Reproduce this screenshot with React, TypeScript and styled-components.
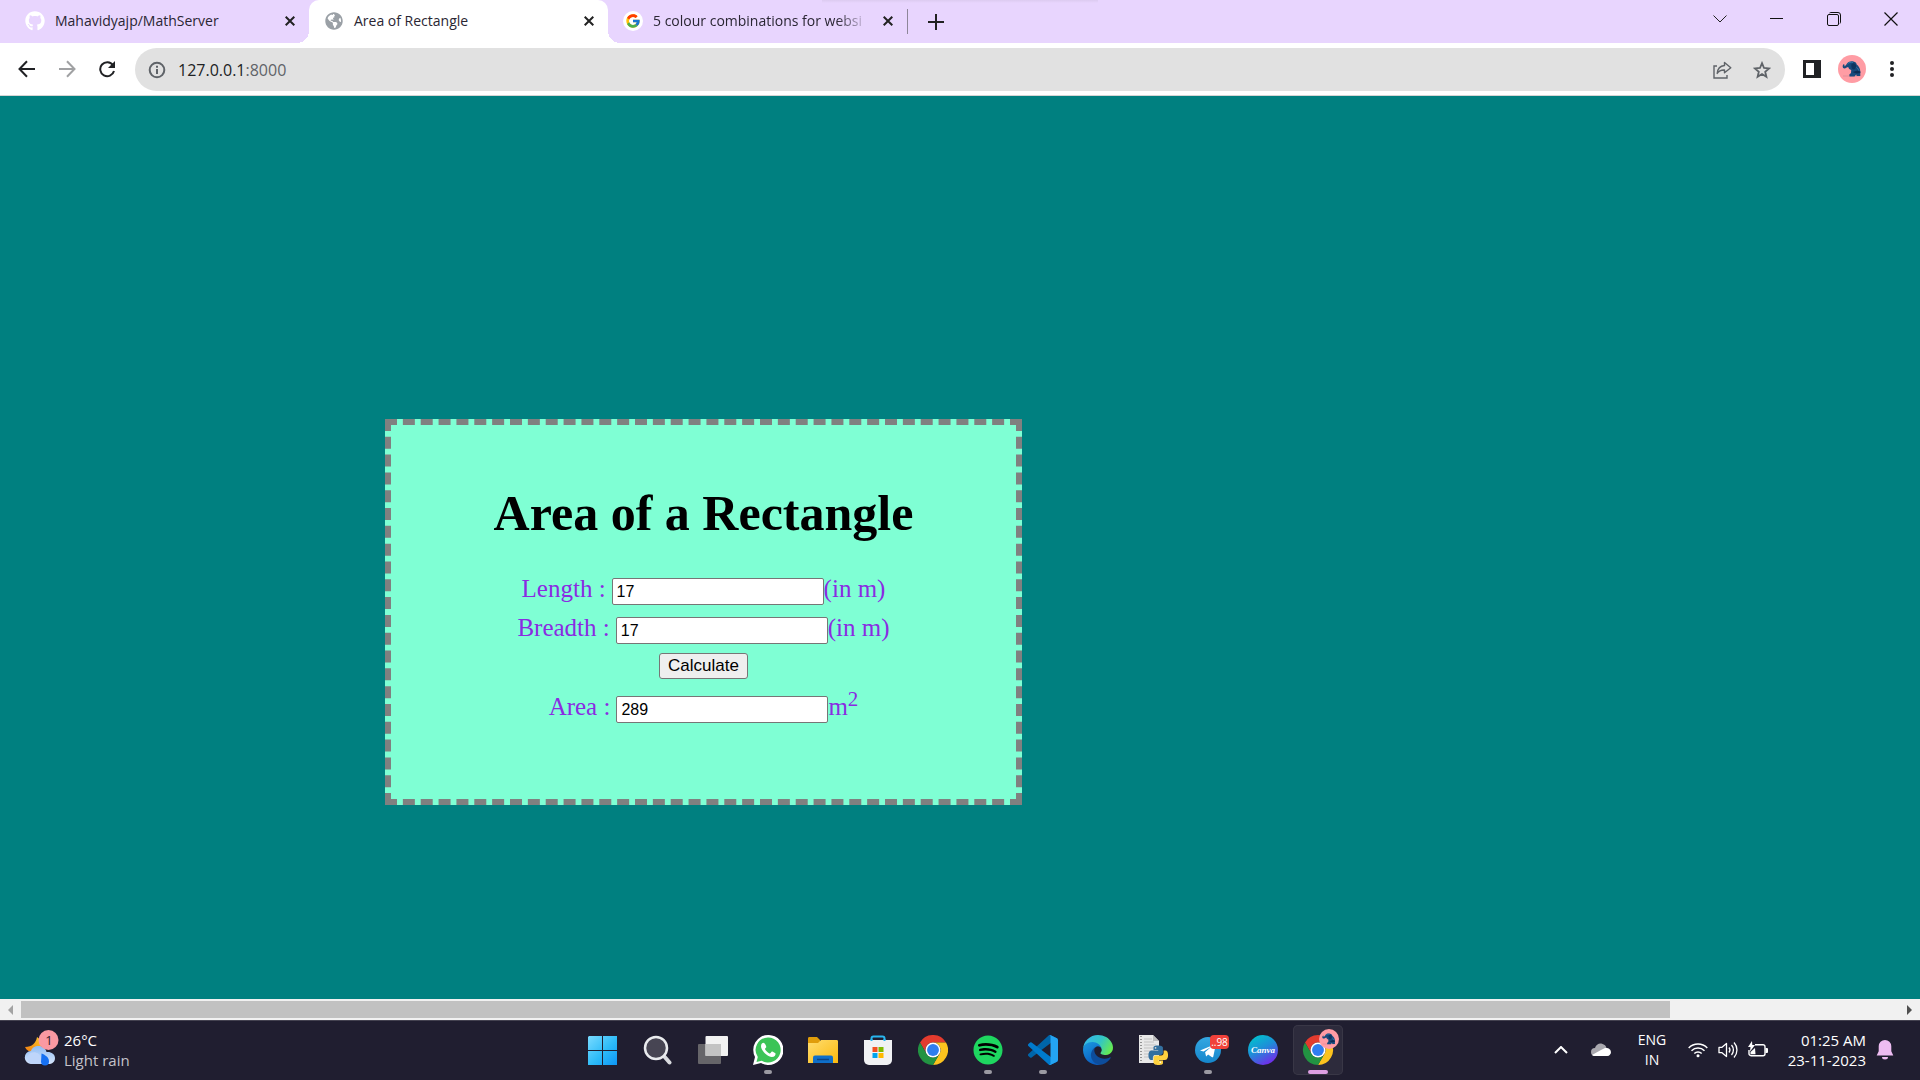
import React, { useState } from 'react';
import styled, { createGlobalStyle, css } from 'styled-components';
import { FaGithub, FaGlobeAmericas, FaSpotify } from 'react-icons/fa';
import { FcGoogle } from 'react-icons/fc';

const ui = `"Open Sans", "Noto Sans", sans-serif`;
const serif = `"Liberation Serif", "Times New Roman", serif`;
const sans = `"Liberation Sans", Arial, sans-serif`;

const GlobalStyle = createGlobalStyle`
  * { box-sizing: border-box; }
  body { margin: 0; overflow: hidden; }
  button { font: inherit; color: inherit; background: none; border: 0; padding: 0; }
  svg { display: block; flex: none; }
`;

const Screen = styled.div`
  display: flex;
  flex-direction: column;
  height: 100vh;
  font-family: ${ui};
`;

/* ---------- Browser chrome ---------- */

const TabStrip = styled.div`
  display: flex;
  justify-content: space-between;
  height: 43px;
  padding-left: 10px;
  background: linear-gradient(#dccbf0, #e8d5fe) no-repeat center top / 276px 3px, #e8d5fe;
`;

const Tabs = styled.div`
  display: flex;
  align-items: stretch;
`;

const flare = css`
  content: '';
  position: absolute;
  bottom: 0;
  width: 12px;
  height: 12px;
`;

const Tab = styled.div<{ $active?: boolean }>`
  position: relative;
  display: flex;
  align-items: center;
  gap: 10px;
  width: 299px;
  padding: 0 10px 2px 15px;
  font-size: 14px;
  color: #2a2633;
  ${(p) =>
    p.$active &&
    css`
      background: #fff;
      border-radius: 10px 10px 0 0;
      &::before {
        ${flare}
        left: -12px;
        background: radial-gradient(circle at 0 0, transparent 12px, #fff 12px);
      }
      &::after {
        ${flare}
        right: -12px;
        background: radial-gradient(circle at 100% 0, transparent 12px, #fff 12px);
      }
    `}
`;

const Favicon = styled.span<{ $color?: string; $disc?: boolean }>`
  display: flex;
  align-items: center;
  justify-content: center;
  width: 20px;
  height: 20px;
  border-radius: 50%;
  font-size: ${(p) => (p.$disc ? 16 : 20)}px;
  color: ${(p) => p.$color};
  background: ${(p) => (p.$disc ? '#fff' : 'none')};
`;

const TabTitle = styled.span<{ $fade?: boolean }>`
  flex: 1;
  min-width: 0;
  white-space: nowrap;
  line-height: 20px;
  ${(p) => p.$fade && 'mask-image: linear-gradient(to right, #000 85%, transparent);'}
`;

const TabClose = styled.button`
  display: flex;
  align-items: center;
  justify-content: center;
  width: 18px;
  height: 20px;
`;

const NewTab = styled.button`
  display: flex;
  align-items: center;
  justify-content: center;
  width: 56px;
`;

const TabDivider = styled.span`
  align-self: center;
  width: 1px;
  height: 25px;
  background: #8e8699;
`;

const WindowControls = styled.div`
  display: flex;
  height: 38px;
  margin-right: 1px;
`;

const WindowButton = styled.button`
  display: flex;
  align-items: center;
  justify-content: center;
  width: 57px;
`;

const Toolbar = styled.div`
  display: flex;
  align-items: center;
  height: 53px;
  padding: 0 8px 0 7px;
  border-bottom: 1px solid #d5d5d5;
  background: #fff;
`;

const ToolButton = styled.button`
  display: flex;
  align-items: center;
  justify-content: center;
  width: 40px;
  height: 40px;
`;

const AddressBar = styled.div`
  display: flex;
  flex: 1;
  align-items: center;
  height: 43px;
  margin: 0 7px 0 8px;
  padding: 1px 3px 0 12px;
  border-radius: 22px;
  background: #e1e1e1;
`;

const Url = styled.a`
  flex: 1;
  margin-left: 11px;
  font-size: 16px;
  line-height: 24px;
  color: #202124;
  text-decoration: none;
`;

const Port = styled.span`
  color: #5f6368;
`;

/* ---------- Page ---------- */

const Page = styled.main`
  flex: 1;
  min-height: 0;
  overflow: hidden;
  padding: 323px 0 0 385px;
  background: #008080;
`;

const Box = styled.form`
  display: flex;
  flex-direction: column;
  align-items: center;
  width: 637px;
  padding: 60px 25px 67px;
  border: 6px dashed #808080;
  background: #7fffd4;
  font-family: ${serif};
`;

const Heading = styled.h1`
  margin: 0 0 34px;
  font-size: 50px;
  line-height: 56px;
  font-weight: bold;
  color: #000;
`;

const Field = styled.div`
  display: flex;
  align-items: baseline;
  height: 31px;
  margin-bottom: 8px;
  font-size: 25px;
  line-height: 28px;
  color: #8a2be2;
`;

const FieldLabel = styled.label`
  margin-right: 6px;
`;

const Super = styled.sup`
  font-size: 21px;
  line-height: 0;
`;

const TextBox = styled.input`
  width: 212px;
  height: 27px;
  padding: 3px 4px 1px;
  border: 1px solid #767676;
  border-radius: 2px;
  background: #fff;
  font-family: ${sans};
  font-size: 16px;
  color: #000;
`;

const Calculate = styled.button`
  height: 26px;
  margin-bottom: 14px;
  padding: 0 8px;
  border: 1px solid #767676;
  border-radius: 3px;
  background: #efefef;
  font-family: ${sans};
  font-size: 17px;
  line-height: 24px;
  color: #000;
`;

const ScrollTrack = styled.div`
  display: flex;
  align-items: center;
  height: 21px;
  background: #f1f1f1;
`;

const ScrollArrow = styled.button`
  display: flex;
  align-items: center;
  justify-content: center;
  width: 21px;
  height: 21px;
`;

const ScrollLane = styled.div`
  flex: 1;
`;

const ScrollThumb = styled.div`
  width: 87.8%;
  height: 17px;
  background: #c1c1c1;
`;

/* ---------- Taskbar ---------- */

const Taskbar = styled.footer`
  display: grid;
  grid-template-columns: 1fr auto 1fr;
  height: 60px;
  padding-bottom: 2px;
  border-top: 1px solid #444250;
  background: #201e30;
  color: #fff;
  font-size: 15px;
  line-height: 20px;
`;

const Weather = styled.button`
  display: flex;
  align-items: center;
  gap: 4px;
  padding-left: 24px;
  text-align: left;
`;

const Muted = styled.div`
  color: #c4c3ca;
`;

const Apps = styled.nav`
  display: flex;
  align-items: center;
  gap: 5px;
`;

const AppButton = styled.button<{ $active?: boolean }>`
  position: relative;
  display: flex;
  align-items: center;
  justify-content: center;
  width: 50px;
  height: 50px;
  border-radius: 5px;
  ${(p) => p.$active && 'background: #2d2b3c; box-shadow: inset 0 0 0 1px #393746;'}
`;

const Indicator = styled.span<{ $active?: boolean }>`
  position: absolute;
  bottom: 1px;
  width: ${(p) => (p.$active ? 20 : 8)}px;
  height: 4px;
  border-radius: 2px;
  background: ${(p) => (p.$active ? '#dd9fe3' : '#9b9aa2')};
`;

const Tray = styled.div`
  display: flex;
  align-items: center;
  justify-content: flex-end;
  padding-right: 23px;
`;

const TrayButton = styled.button<{ $w: number }>`
  display: flex;
  align-items: center;
  justify-content: center;
  width: ${(p) => p.$w}px;
  height: 50px;
`;

const Language = styled.button`
  width: 62px;
  font-size: 14px;
  text-align: center;
`;

const Clock = styled.button`
  width: 93px;
  margin-right: 7px;
  text-align: right;
`;

/* ---------- Drawings ---------- */

const CloseGlyph = () => (
  <svg width="10" height="10" viewBox="0 0 10 10" stroke="#222" strokeWidth="2" aria-hidden>
    <path d="M.7.7l8.6 8.6M9.3.7L.7 9.3" />
  </svg>
);

const Elephant = () => (
  <>
    <circle cx="14" cy="14" r="14" fill="#ff9ca4" />
    <path d="M5 20.500h17v1H5z" fill="#e28e98" />
    <path
      d="M9 8.500C10.500 6.500 13 6 15.500 6.500c2 .4 3 1.500 3.200 3 2 1.500 3.600 4 3.600 7V21h-3.600l-.5-1.500-1.700 2h-5l-.2-2 1.700-1.500.2-3c-1.500-.5-2.700-1.500-3-3l-1.500.5c-1.200 1-2.700 1.300-3.500.5C4.300 12 4.500 9.500 6 9l.6 1.300-.4 1c1.200-.2 2-1.500 2.800-2.800z"
      fill="#174a7c"
    />
    <path d="M13.500 9c1.500-1.500 4-1 4.500 1.500.3 2-1 4-2.500 4-2-.5-2.500-3.500-2-5.500z" fill="#0d3560" />
    <path d="M14.500 17l5-1.500 2.800 1V18l-4 .5z" fill="#0d2c54" />
    <path d="M9.500 9c1.500-1.700 3.500-2 5.500-1.700M18.500 12.500c1.300.8 2 2 2.300 3" stroke="#367cae" fill="none" />
  </>
);

const ChromeLogo = () => (
  <>
    <path d="M3.200 12A24 24 0 0 1 44.800 12H24A12 12 0 0 0 13.600 30Z" fill="#e33b2e" />
    <path d="M44.800 12A24 24 0 0 1 24 48L34.400 30A12 12 0 0 0 24 12Z" fill="#fcc31e" />
    <path d="M24 48A24 24 0 0 1 3.200 12L13.600 30A12 12 0 0 0 34.400 30Z" fill="#229342" />
    <circle cx="24" cy="24" r="12" fill="#fff" />
    <circle cx="24" cy="24" r="9.500" fill="#2f7df0" />
  </>
);

const WeatherIcon = () => (
  <svg width="36" height="40" viewBox="0 2 36 40" aria-hidden>
    <defs>
      <linearGradient id="cloud" x1="0" y1="0" x2="0" y2="1">
        <stop offset="0" stopColor="#8fbcf5" />
        <stop offset="1" stopColor="#d5e5fb" />
      </linearGradient>
      <linearGradient id="moon" x1="0" y1="1" x2="1" y2="0">
        <stop offset="0" stopColor="#f07c10" />
        <stop offset="1" stopColor="#fbc62c" />
      </linearGradient>
    </defs>
    <path d="M13 9c-1 6-5 10-12 10 2 5 9 7 14 3 4-4 3-10-2-13z" fill="url(#moon)" />
    <path d="M7.500 36a6.500 6.500 0 0 1-.5-13c1-4 6-6 10.500-4.500 3 1 4.500 3 5 5.500 4.500-.5 8.500 2 8.500 6s-3 6-6.500 6z" fill="url(#cloud)" />
    <path d="M7.500 36a6 6 0 0 1-1-11c4-2 9.500 0 10.500 5v6z" fill="#bed5fa" />
    <path d="M17.500 25.500c4 1.500 7.500 4 7.500 8a4 4 0 0 1-8 0z" fill="#1670f2" />
    <circle cx="24.500" cy="12" r="10" fill="#fb99a2" />
    <text x="25" y="17" textAnchor="middle" fontSize="13" fontFamily={ui} fill="#33202c">1</text>
  </svg>
);

const StartIcon = () => (
  <svg width="30" height="30" viewBox="0 0 30 30" aria-hidden>
    <defs>
      <linearGradient id="start" gradientUnits="userSpaceOnUse" x1="0" y1="0" x2="30" y2="30">
        <stop offset="0" stopColor="#7cdcff" />
        <stop offset=".55" stopColor="#2dbbf8" />
        <stop offset="1" stopColor="#0c94f4" />
      </linearGradient>
    </defs>
    <path d="M1 1h13v14H0V2zM15 1h14v14H15zM0 16h14v14H0zM15 16h14v14H15z" fill="url(#start)" />
  </svg>
);

const SearchIcon = () => (
  <svg width="30" height="30" viewBox="0 0 30 30" aria-hidden>
    <path d="M20 20l6.500 7.500" stroke="#d8dade" strokeWidth="4" strokeLinecap="round" />
    <circle cx="13" cy="13" r="11" fill="#474553" stroke="#e9ebee" strokeWidth="2.500" />
  </svg>
);

const TaskViewIcon = () => (
  <svg width="30" height="30" viewBox="0 0 30 30" aria-hidden>
    <rect x="0" y="9" width="23" height="20" rx="1" fill="#666569" />
    <rect x="7.500" y="1" width="22.500" height="20" rx="1" fill="#f2f2f2" />
    <path d="M7.500 9H23v12H7.500z" fill="#c3c3c3" />
  </svg>
);

const WhatsAppIcon = () => (
  <svg width="30" height="30" viewBox="0 0 30 30" aria-hidden>
    <path d="M15 0a15 15 0 1 1-7 28L0 30l2-8A15 15 0 0 1 15 0z" fill="#fff" />
    <path d="M15 2.500a12.500 12.500 0 1 1-6.300 23.200L3.500 27l1.300-5A12.500 12.500 0 0 1 15 2.500z" fill="#3cc457" />
    <path
      d="M10.300 7.700c-.6 0-2.300.8-2.300 3.600 0 4 6.300 10.700 10.800 10.700 2.800 0 3.800-1.800 3.800-3.200 0-.6-3-2.200-3.600-2.200-.7 0-1.300 1.900-2 1.900-1.200 0-4.800-3.200-5-4.600 0-.5 1.300-1.300 1.300-2 0-.6-1.300-4.200-3-4.200z"
      fill="#fff"
    />
  </svg>
);

const ExplorerIcon = () => (
  <svg width="30" height="30" viewBox="0 0 30 30" aria-hidden>
    <defs>
      <linearGradient id="folder" x1="0" y1="0" x2="1" y2="1">
        <stop offset="0" stopColor="#ffdd70" />
        <stop offset="1" stopColor="#fbb90d" />
      </linearGradient>
    </defs>
    <path d="M0 3.500C0 2.500.5 2 1.500 2H9l3 3v5H0z" fill="#e09d0b" />
    <path d="M0 8h10l3-3h15.500c1 0 1.500.5 1.500 1.500V28H0z" fill="url(#folder)" />
    <path d="M5 28v-5.500a2 2 0 0 1 2-2h16a2 2 0 0 1 2 2V28z" fill="#0f6fc9" />
    <path d="M9 24.500h12" stroke="#0c4485" strokeWidth="1.500" />
  </svg>
);

const StoreIcon = () => (
  <svg width="30" height="30" viewBox="0 0 30 30" aria-hidden>
    <path d="M8.500 7V3.500c0-1.300.5-2 2-2h9c1.500 0 2 .7 2 2V7" fill="none" stroke="#28b6ef" strokeWidth="2" />
    <path d="M1 5h28v20a5 5 0 0 1-5 5H6a5 5 0 0 1-5-5z" fill="#f1f2f4" />
    <path d="M8.500 6V4M21.500 6V4" stroke="#28b6ef" strokeWidth="2" />
    <path d="M9.500 12h5v5h-5z" fill="#f25022" />
    <path d="M15.500 12h5v5h-5z" fill="#7fba00" />
    <path d="M9.500 18h5v5h-5z" fill="#00a4ef" />
    <path d="M15.500 18h5v5h-5z" fill="#ffb900" />
  </svg>
);

const ChromeIcon = () => (
  <svg width="30" height="30" viewBox="0 0 48 48" aria-hidden>
    <ChromeLogo />
  </svg>
);

const ChromeProfileIcon = () => (
  <svg width="42" height="42" viewBox="0 0 42 42" aria-hidden>
    <g transform="translate(6 6) scale(.625)">
      <ChromeLogo />
    </g>
    <g transform="translate(22 0) scale(.714)">
      <Elephant />
    </g>
  </svg>
);

const SpotifyIcon = () => (
  <svg width="30" height="30" viewBox="0 0 30 30" aria-hidden>
    <circle cx="15" cy="15" r="13" fill="#000" />
    <FaSpotify size={30} color="#1ed760" />
  </svg>
);

const VsCodeIcon = () => (
  <svg width="30" height="30" viewBox="0 0 100 100" aria-hidden>
    <path d="M96.460 10.800L75.860.88a6.230 6.230 0 0 0-7.110 1.200L1.300 63.600a4.170 4.170 0 0 0 0 6.160l5.500 5a4.160 4.160 0 0 0 5.320.24L93.350 13.400A4.140 4.140 0 0 1 100 16.700v-.25a6.250 6.250 0 0 0-3.540-5.650z" fill="#0065a9" />
    <path d="M96.460 89.200l-20.600 9.920a6.230 6.230 0 0 1-7.110-1.200L1.300 36.400a4.170 4.170 0 0 1 0-6.160l5.500-5a4.160 4.160 0 0 1 5.320-.24l81.230 61.600A4.140 4.140 0 0 0 100 83.300v.25a6.250 6.250 0 0 1-3.540 5.650z" fill="#007acc" />
    <path d="M75.860 99.130a6.230 6.230 0 0 1-7.110-1.210c2.300 2.300 6.250.67 6.250-2.590V4.670c0-3.260-3.950-4.890-6.250-2.590a6.230 6.230 0 0 1 7.110-1.210l20.600 9.900A6.250 6.250 0 0 1 100 16.400v67.200a6.250 6.250 0 0 1-3.540 5.640z" fill="#24a4f2" />
  </svg>
);

const EdgeIcon = () => (
  <svg width="30" height="30" viewBox="0 0 256 256" aria-hidden>
    <defs>
      <linearGradient id="edgeTop" x1="0" y1=".2" x2="1" y2=".6">
        <stop offset="0" stopColor="#35b8ee" />
        <stop offset=".55" stopColor="#33c6c4" />
        <stop offset="1" stopColor="#66eb50" />
      </linearGradient>
      <linearGradient id="edgeMid" x1="0" y1="0" x2=".5" y2="1">
        <stop offset="0" stopColor="#1b9de2" />
        <stop offset="1" stopColor="#0a5cc0" />
      </linearGradient>
    </defs>
    <path d="M231 190.500c-3.400 1.800-6.900 3.400-10.500 4.700a101.900 101.900 0 0 1-35.900 6.500c-47.300 0-88.500-32.500-88.500-74.300a31.500 31.500 0 0 1 16.400-27.300c-42.800 1.800-53.800 46.400-53.800 72.500 0 74 68.100 81.400 82.800 81.400 7.900 0 19.800-2.300 27-4.600l1.300-.4a128.300 128.300 0 0 0 66.600-52.800 4 4 0 0 0-5.400-5.700z" fill="#0d4d9c" />
    <path d="M105.700 241.400a79.200 79.200 0 0 1-22.700-21.300 80.700 80.700 0 0 1 29.500-120c3.200-1.500 8.500-4.100 15.600-4a32.400 32.400 0 0 1 25.700 13 31.900 31.900 0 0 1 6.300 18.700c0-.2 24.500-79.600-80-79.600-43.900 0-80 41.600-80 78.200a130.200 130.200 0 0 0 12.100 56 128 128 0 0 0 156.400 67 75.500 75.500 0 0 1-62.800-8z" fill="url(#edgeMid)" />
    <path d="M152.300 148.900c-.9 1-3.400 2.500-3.400 5.600 0 2.600 1.700 5.200 4.800 7.300 14.300 10 41.400 8.600 41.500 8.600a59.600 59.600 0 0 0 30.300-8.300 61.400 61.400 0 0 0 30.400-52.900c.3-22.400-8-37.300-11.300-43.900C223.500 23.900 177.700 0 128 0A128 128 0 0 0 0 126.200c.5-36.500 36.800-66 80-66 3.500 0 23.500.3 42 10a72.600 72.600 0 0 1 30.900 29.300c6.100 10.600 7.200 24.100 7.200 29.500s-2.700 13.300-7.800 19.900z" fill="url(#edgeTop)" />
  </svg>
);

const PythonFileIcon = () => (
  <svg width="30" height="30" viewBox="0 0 30 30" aria-hidden>
    <path d="M1 0h14l6 6v22H1z" fill="#e8e8e8" />
    <path d="M15 0v6h6z" fill="#bcbcbc" />
    <path d="M3 1v26" stroke="#777" strokeWidth="1.500" strokeDasharray="1 2" />
    <path d="M6 4h8M6 7h10M6 10h12M6 13h12M6 16h11M6 19h11M6 22h11" stroke="#c2c2c2" />
    <g transform="translate(10.500 10.500) scale(.81)">
      <path
        d="M14.250.18l.9.2.73.26.59.3.45.32.34.34.25.34.16.33.1.3.04.26.02.2-.01.13V8.500l-.05.63-.13.55-.21.46-.26.38-.3.31-.33.25-.35.19-.35.14-.33.1-.3.07-.26.04-.21.02H8.770l-.69.05-.59.14-.5.22-.41.27-.33.32-.27.35-.2.36-.15.37-.1.35-.07.32-.04.27-.02.21v3.060H3.170l-.21-.03-.28-.07-.32-.12-.35-.18-.36-.26-.36-.36-.35-.46-.32-.59-.28-.73-.21-.88-.14-1.050-.05-1.230.06-1.220.16-1.040.24-.87.32-.71.36-.57.4-.44.42-.33.42-.24.4-.16.36-.1.32-.05.24-.01h.16l.06.01h8.160v-.83H6.180l-.01-2.750-.02-.37.05-.34.11-.31.17-.28.25-.26.31-.23.38-.2.44-.18.51-.15.58-.12.64-.1.71-.06.77-.04.84-.02 1.270.05zm-6.300 1.980l-.23.33-.08.41.08.41.23.34.33.22.41.09.41-.09.33-.22.23-.34.08-.41-.08-.41-.23-.33-.33-.22-.41-.09-.41.09z"
        fill="#33709f"
      />
      <path
        d="M21.100 6.110l.28.06.32.12.35.18.36.27.36.35.35.47.32.59.28.73.21.88.14 1.040.05 1.230-.06 1.230-.16 1.040-.24.86-.32.71-.36.57-.4.45-.42.33-.42.24-.4.16-.36.09-.32.05-.24.02-.16-.01h-8.220v.82h5.840l.01 2.760.02.36-.05.34-.11.31-.17.29-.25.25-.31.24-.38.2-.44.17-.51.15-.58.13-.64.09-.71.07-.77.04-.84.01-1.270-.04-1.070-.14-.9-.2-.73-.25-.59-.3-.45-.33-.34-.34-.25-.34-.16-.33-.1-.3-.04-.25-.02-.2.01-.13v-5.340l.05-.64.13-.54.21-.46.26-.38.3-.32.33-.24.35-.2.35-.14.33-.1.3-.06.26-.04.21-.02.13-.01h5.840l.69-.05.59-.14.5-.21.41-.28.33-.32.27-.35.2-.36.15-.36.1-.35.07-.32.04-.28.02-.21V6.070h2.090z"
        fill="#ffd23f"
      />
      <circle cx="14.600" cy="20.700" r="1" fill="#fff" />
    </g>
  </svg>
);

const TelegramIcon = () => (
  <svg width="42" height="34" viewBox="0 0 42 34" aria-hidden>
    <defs>
      <linearGradient id="telegram" x1="0" y1="0" x2="0" y2="1">
        <stop offset="0" stopColor="#34a8e2" />
        <stop offset="1" stopColor="#1586cc" />
      </linearGradient>
    </defs>
    <circle cx="21" cy="17" r="13" fill="url(#telegram)" />
    <path d="M13 17.500l14.500-6c.8-.3 1.300.2 1.100 1.100l-2.300 10.800c-.2 1-.8 1.200-1.600.7l-3.600-2.700-2 2-1-4.100 6.200-5.600-7.800 4.900z" fill="#fff" />
    <rect x="23" y="2" width="19" height="14" rx="4" fill="#f0413a" />
    <text x="32.500" y="13" textAnchor="middle" fontSize="10" fontFamily={ui} fill="#fff">..98</text>
  </svg>
);

const CanvaIcon = () => (
  <svg width="30" height="30" viewBox="0 0 30 30" aria-hidden>
    <defs>
      <linearGradient id="canva" x1=".2" y1="0" x2=".75" y2="1">
        <stop offset="0" stopColor="#00c4cc" />
        <stop offset=".45" stopColor="#1d8fd8" />
        <stop offset="1" stopColor="#7a22ec" />
      </linearGradient>
    </defs>
    <circle cx="15" cy="15" r="15" fill="url(#canva)" />
    <text x="15" y="18" textAnchor="middle" fontSize="9" fontStyle="italic" fontWeight="bold" fontFamily={serif} fill="#fff">Canva</text>
  </svg>
);

const apps = [
  { name: 'Start', Icon: StartIcon },
  { name: 'Search', Icon: SearchIcon },
  { name: 'Task View', Icon: TaskViewIcon },
  { name: 'WhatsApp', Icon: WhatsAppIcon, running: true },
  { name: 'File Explorer', Icon: ExplorerIcon },
  { name: 'Microsoft Store', Icon: StoreIcon },
  { name: 'Google Chrome', Icon: ChromeIcon },
  { name: 'Spotify', Icon: SpotifyIcon, running: true },
  { name: 'Visual Studio Code', Icon: VsCodeIcon, running: true },
  { name: 'Microsoft Edge', Icon: EdgeIcon },
  { name: 'Python', Icon: PythonFileIcon },
  { name: 'Telegram', Icon: TelegramIcon, running: true },
  { name: 'Canva', Icon: CanvaIcon },
  { name: 'Chrome profile', Icon: ChromeProfileIcon, running: true, active: true },
];

function BrowserTabs() {
  return (
    <TabStrip>
      <Tabs>
        <Tab>
          <Favicon $color="#fff"><FaGithub /></Favicon>
          <TabTitle>Mahavidyajp/MathServer</TabTitle>
          <TabClose aria-label="Close tab"><CloseGlyph /></TabClose>
        </Tab>
        <Tab $active>
          <Favicon $color="#9aa0a6"><FaGlobeAmericas size={18} /></Favicon>
          <TabTitle>Area of Rectangle</TabTitle>
          <TabClose aria-label="Close tab"><CloseGlyph /></TabClose>
        </Tab>
        <Tab>
          <Favicon $disc><FcGoogle /></Favicon>
          <TabTitle $fade>5 colour combinations for websi</TabTitle>
          <TabClose aria-label="Close tab"><CloseGlyph /></TabClose>
        </Tab>
        <TabDivider />
        <NewTab aria-label="New tab">
          <svg width="16" height="16" viewBox="0 0 16 16" stroke="#222" strokeWidth="2" aria-hidden>
            <path d="M8 0v16M0 8h16" />
          </svg>
        </NewTab>
      </Tabs>
      <WindowControls>
        <WindowButton aria-label="Search tabs">
          <svg width="14" height="8" viewBox="0 0 14 8" fill="none" stroke="#222" aria-hidden><path d="M.5.5L7 7 13.500.5" /></svg>
        </WindowButton>
        <WindowButton aria-label="Minimize">
          <svg width="13" height="2" viewBox="0 0 13 2" aria-hidden><path d="M0 0h13v1H0z" fill="#111" /></svg>
        </WindowButton>
        <WindowButton aria-label="Restore">
          <svg width="14" height="14" viewBox="0 0 14 14" fill="none" stroke="#111" aria-hidden>
            <rect x=".5" y="2.500" width="11" height="11" rx="1.500" />
            <path d="M2.500 1C3 .6 3.500.5 4 .5h7a2.500 2.500 0 0 1 2.500 2.500v7c0 .5-.1 1-.5 1.500" />
          </svg>
        </WindowButton>
        <WindowButton aria-label="Close">
          <svg width="14" height="14" viewBox="0 0 14 14" stroke="#111" strokeWidth="1.200" aria-hidden><path d="M.5.5l13 13M13.500.5l-13 13" /></svg>
        </WindowButton>
      </WindowControls>
    </TabStrip>
  );
}

function BrowserToolbar() {
  return (
    <Toolbar>
      <ToolButton aria-label="Back">
        <svg width="18" height="18" viewBox="0 0 18 18" fill="none" stroke="#202124" strokeWidth="2" aria-hidden>
          <path d="M17 9H2M9 1.300L1.500 9 9 16.700" />
        </svg>
      </ToolButton>
      <ToolButton aria-label="Forward">
        <svg width="18" height="18" viewBox="0 0 18 18" fill="none" stroke="#a0a1a3" strokeWidth="2" aria-hidden>
          <path d="M1 9H16M9 1.300L16.500 9 9 16.700" />
        </svg>
      </ToolButton>
      <ToolButton aria-label="Reload">
        <svg width="18" height="18" viewBox="0 0 18 18" fill="none" aria-hidden>
          <path d="M15 5.200a7 7 0 1 0 1 5.800" stroke="#202124" strokeWidth="2" />
          <path d="M17 1v7h-7z" fill="#202124" />
        </svg>
      </ToolButton>
      <AddressBar>
        <svg width="20" height="20" viewBox="0 0 20 20" fill="none" stroke="#5f6368" strokeWidth="2" aria-hidden>
          <circle cx="10" cy="10" r="7.300" />
          <path d="M10 9v5M10 5.800v2" />
        </svg>
        <Url href="#">127.0.0.1<Port>:8000</Port></Url>
        <ToolButton aria-label="Share">
          <svg width="19" height="18" viewBox="0 0 19 18" fill="none" stroke="#5f6368" strokeWidth="1.400" aria-hidden>
            <path d="M4 5H1v12h13v-3" />
            <path d="M11.500 1.500l6.300 5.200-6.300 5V9c-3.500-.2-5.700.9-7.300 3.500C4.500 8 7 5 11.500 4.500z" strokeLinejoin="round" />
          </svg>
        </ToolButton>
        <ToolButton aria-label="Bookmark">
          <svg width="18" height="18" viewBox="0 0 18 18" fill="none" stroke="#5f6368" strokeWidth="1.800" aria-hidden>
            <path d="M9 2.200l2 4.800 5.100.4-3.900 3.400 1.200 5L9 13.100l-4.400 2.700 1.200-5L1.900 7.400 7 7z" />
          </svg>
        </ToolButton>
      </AddressBar>
      <ToolButton aria-label="Side panel">
        <svg width="18" height="18" viewBox="0 0 18 18" aria-hidden>
          <path d="M0 0h18v18H0zM3 3v12h8V3z" fillRule="evenodd" fill="#202124" />
        </svg>
      </ToolButton>
      <ToolButton aria-label="Profile">
        <svg width="28" height="28" viewBox="0 0 28 28" aria-hidden><Elephant /></svg>
      </ToolButton>
      <ToolButton aria-label="Menu">
        <svg width="4" height="16" viewBox="0 0 4 16" fill="#202124" aria-hidden>
          <circle cx="2" cy="2" r="2" /><circle cx="2" cy="8" r="2" /><circle cx="2" cy="14" r="2" />
        </svg>
      </ToolButton>
    </Toolbar>
  );
}

function AreaForm() {
  const [length, setLength] = useState('17');
  const [breadth, setBreadth] = useState('17');
  const [area, setArea] = useState('289');
  const submit = (e: React.FormEvent) => {
    e.preventDefault();
    setArea(String(Number(length) * Number(breadth)));
  };
  return (
    <Box onSubmit={submit}>
      <Heading>Area of a Rectangle</Heading>
      <Field>
        <FieldLabel htmlFor="length">Length :</FieldLabel>
        <TextBox id="length" value={length} onChange={(e) => setLength(e.target.value)} />
        <span>(in m)</span>
      </Field>
      <Field>
        <FieldLabel htmlFor="breadth">Breadth :</FieldLabel>
        <TextBox id="breadth" value={breadth} onChange={(e) => setBreadth(e.target.value)} />
        <span>(in m)</span>
      </Field>
      <Calculate type="submit">Calculate</Calculate>
      <Field>
        <FieldLabel htmlFor="area">Area :</FieldLabel>
        <TextBox id="area" value={area} readOnly />
        <span>m<Super>2</Super></span>
      </Field>
    </Box>
  );
}

function WindowsTaskbar() {
  return (
    <Taskbar>
      <Weather>
        <WeatherIcon />
        <div>
          <div>26°C</div>
          <Muted>Light rain</Muted>
        </div>
      </Weather>
      <Apps>
        {apps.map(({ name, Icon, running, active }) => (
          <AppButton key={name} aria-label={name} $active={active}>
            <Icon />
            {running && <Indicator $active={active} />}
          </AppButton>
        ))}
      </Apps>
      <Tray>
        <TrayButton $w={40} aria-label="Show hidden icons">
          <svg width="14" height="8" viewBox="0 0 14 8" fill="none" stroke="#fff" strokeWidth="2" aria-hidden><path d="M1 7l6-6 6 6" /></svg>
        </TrayButton>
        <TrayButton $w={40} aria-label="OneDrive">
          <svg width="20" height="14" viewBox="0 0 20 14" aria-hidden>
            <path d="M4 13a4 4 0 0 1 0-8c1-3.500 4-5 7-4.300 2.500.6 4 2.300 4.500 4.300 3 0 4.500 2 4.500 4s-1.500 4-4 4z" fill="#a9a8ae" />
            <path d="M1 12l9-5 3-1.500c2-1 4-.5 6 1.500 2 3-.5 6-3 6H4c-1.500 0-2.500-.5-3-1z" fill="#fff" />
          </svg>
        </TrayButton>
        <Language>
          <div>ENG</div>
          <div>IN</div>
        </Language>
        <TrayButton $w={30} aria-label="Wi-Fi">
          <svg width="20" height="16" viewBox="0 0 20 16" fill="none" stroke="#fff" strokeWidth="1.500" aria-hidden>
            <path d="M.7 6a13 13 0 0 1 18.600 0M3.500 8.800a9.200 9.200 0 0 1 13 0M6.300 11.500a5.200 5.200 0 0 1 7.400 0" />
            <circle cx="10" cy="13.800" r="1.500" fill="#fff" stroke="none" />
          </svg>
        </TrayButton>
        <TrayButton $w={30} aria-label="Volume">
          <svg width="20" height="18" viewBox="0 0 20 18" fill="none" stroke="#fff" strokeWidth="1.300" aria-hidden>
            <path d="M1 6.300h3L8.500 2.500v13L4 11.700H1z" strokeLinejoin="round" />
            <path d="M11 6.500a4 4 0 0 1 0 5M13.500 4a7.500 7.500 0 0 1 0 10M16 1.500a11 11 0 0 1 0 15" />
          </svg>
        </TrayButton>
        <TrayButton $w={30} aria-label="Battery">
          <svg width="20" height="18" viewBox="0 0 20 18" fill="none" aria-hidden>
            <path d="M7 3.700h8a2 2 0 0 1 2 2v7a2 2 0 0 1-2 2H3a2 2 0 0 1-2-2V9" stroke="#fff" strokeWidth="1.400" />
            <path d="M17.500 7h1.500a1 1 0 0 1 1 1v3a1 1 0 0 1-1 1h-1.500z" fill="#fff" />
            <path d="M2.500 13.200V11L7 7l.5 6.200zM4 0L0 6h2.500L2 10.500 7 4H4.300z" fill="#fff" />
          </svg>
        </TrayButton>
        <Clock>
          <div>01:25 AM</div>
          <div>23-11-2023</div>
        </Clock>
        <TrayButton $w={24} aria-label="Notifications">
          <svg width="18" height="20" viewBox="0 0 18 20" aria-hidden>
            <path d="M9 0a6.300 6.300 0 0 1 6.300 6.300v5l2 4.200H.7l2-4.200v-5A6.300 6.300 0 0 1 9 0zM6 17h6a3 2.500 0 0 1-6 0z" fill="#eebcf2" />
          </svg>
        </TrayButton>
      </Tray>
    </Taskbar>
  );
}

export default function App() {
  return (
    <Screen>
      <GlobalStyle />
      <BrowserTabs />
      <BrowserToolbar />
      <Page>
        <AreaForm />
      </Page>
      <ScrollTrack>
        <ScrollArrow aria-label="Scroll left">
          <svg width="5" height="10" viewBox="0 0 5 10" aria-hidden><path d="M5 0v10L0 5z" fill="#a3a3a3" /></svg>
        </ScrollArrow>
        <ScrollLane><ScrollThumb /></ScrollLane>
        <ScrollArrow aria-label="Scroll right">
          <svg width="5" height="10" viewBox="0 0 5 10" aria-hidden><path d="M0 0v10l5-5z" fill="#505050" /></svg>
        </ScrollArrow>
      </ScrollTrack>
      <WindowsTaskbar />
    </Screen>
  );
}
